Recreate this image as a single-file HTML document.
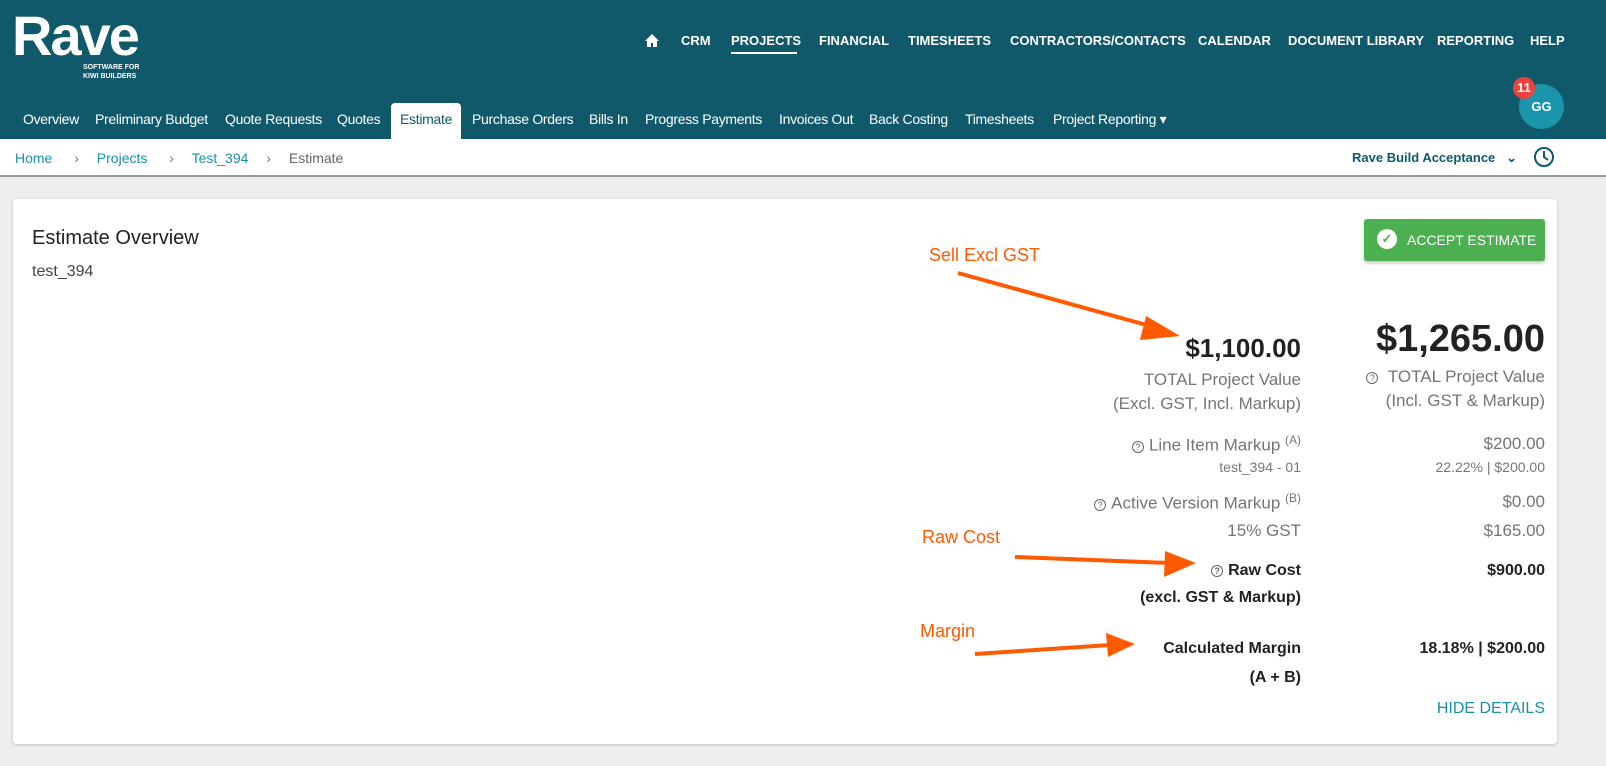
<!DOCTYPE html>
<html><head><meta charset="utf-8"><style>
*{margin:0;padding:0;box-sizing:border-box}
body{width:1606px;height:766px;background:#eeeeee;font-family:"Liberation Sans",Arial,sans-serif;position:relative;overflow:hidden}
.hdr{position:absolute;left:0;top:0;width:1606px;height:139px;background:#10596b}
.a{position:absolute;white-space:nowrap}
.top{top:33px;color:#fff;font-weight:bold;font-size:13px}
.sub{top:111px;color:#fff;font-size:14px;letter-spacing:-0.3px}
.r{text-align:right}
.g{color:#757575}
.k{color:#222}
.q{display:inline-block;width:12px;height:12px;border:1.3px solid #666;border-radius:50%;font-size:9px;line-height:10px;text-align:center;color:#666;vertical-align:1px;margin-right:5px}
.o{color:#ff5a00;font-size:18px}
</style></head><body>
<div class="hdr"></div>
<div class="a" style="left:12px;top:6px;color:#fff;font-size:56px;font-weight:bold;letter-spacing:-2px;line-height:60px">Rave</div>
<div class="a" style="left:83px;top:63px;color:#fff;font-size:7px;font-weight:bold;line-height:9px">SOFTWARE FOR<br>KIWI BUILDERS</div>
<svg class="a" style="left:644px;top:33px" width="16" height="15" viewBox="0 0 16 15"><path d="M8 1L1 8h2v6h4v-4h2v4h4V8h2z" fill="#fff"/></svg>
<div class="a top" style="left:681px">CRM</div>
<div class="a top" style="left:731px">PROJECTS</div>
<div class="a" style="left:731px;top:52px;width:66px;height:2px;background:#fff"></div>
<div class="a top" style="left:819px">FINANCIAL</div>
<div class="a top" style="left:908px">TIMESHEETS</div>
<div class="a top" style="left:1010px">CONTRACTORS/CONTACTS</div>
<div class="a top" style="left:1198px">CALENDAR</div>
<div class="a top" style="left:1288px">DOCUMENT LIBRARY</div>
<div class="a top" style="left:1437px">REPORTING</div>
<div class="a top" style="left:1530px">HELP</div>
<div class="a" style="left:391px;top:103px;width:70px;height:36px;background:#fff;border-radius:4px 4px 0 0"></div>
<div class="a sub" style="left:23px">Overview</div>
<div class="a sub" style="left:95px">Preliminary Budget</div>
<div class="a sub" style="left:225px">Quote Requests</div>
<div class="a sub" style="left:337px">Quotes</div>
<div class="a sub" style="left:400px;color:#10596b">Estimate</div>
<div class="a sub" style="left:472px">Purchase Orders</div>
<div class="a sub" style="left:589px">Bills In</div>
<div class="a sub" style="left:645px">Progress Payments</div>
<div class="a sub" style="left:779px">Invoices Out</div>
<div class="a sub" style="left:869px">Back Costing</div>
<div class="a sub" style="left:965px">Timesheets</div>
<div class="a sub" style="left:1053px">Project Reporting ▾</div>
<div class="a" style="left:1519px;top:84px;width:45px;height:45px;border-radius:50%;background:#1b95ab;color:#fff;font-weight:bold;font-size:13px;line-height:45px;text-align:center">GG</div>
<div class="a" style="left:1513px;top:77px;width:22px;height:22px;border-radius:50%;background:#f0403a;color:#fff;font-weight:bold;font-size:13px;line-height:22px;text-align:center">11</div>
<div class="a" style="left:0;top:139px;width:1606px;height:38px;background:#fff;border-bottom:2px solid #999"></div>
<div class="a" style="left:15px;top:150px;font-size:14px;color:#1b8fa8">Home <span style="color:#777;margin:0 14px 0 18px">›</span> Projects <span style="color:#777;margin:0 14px 0 18px">›</span> Test_394 <span style="color:#777;margin:0 14px 0 14px">›</span> <span style="color:#666">Estimate</span></div>
<div class="a" style="left:1352px;top:150px;font-size:13px;font-weight:bold;color:#10596b">Rave Build Acceptance &nbsp; ⌄</div>
<svg class="a" style="left:1533px;top:146px" width="22" height="22" viewBox="0 0 22 22"><circle cx="11" cy="11" r="9" fill="none" stroke="#10596b" stroke-width="2"/><path d="M11 5v6l4 3" fill="none" stroke="#10596b" stroke-width="2"/></svg>
<div class="a" style="left:13px;top:199px;width:1544px;height:545px;background:#fff;border-radius:4px;box-shadow:0 1px 3px rgba(0,0,0,.2)"></div>
<div class="a k" style="left:32px;top:227px;font-size:20px">Estimate Overview</div>
<div class="a k" style="left:32px;top:263px;font-size:16px;color:#444">test_394</div>
<div class="a" style="left:1364px;top:219px;width:181px;height:42px;background:#4caf50;border-radius:3px;box-shadow:0 2px 3px rgba(0,0,0,.25);color:#fff;font-size:14px;line-height:42px;padding-left:43px">ACCEPT ESTIMATE</div>
<div class="a" style="left:1377px;top:229px;width:20px;height:20px;border-radius:50%;background:#fff;color:#4caf50;font-size:13px;line-height:20px;text-align:center;font-weight:bold">✓</div>
<div class="a r k" style="right:305px;top:333px;font-size:26px;font-weight:bold;color:#222">$1,100.00</div>
<div class="a r g" style="right:305px;top:368px;font-size:17px;line-height:24px">TOTAL Project Value<br>(Excl. GST, Incl. Markup)</div>
<div class="a r k" style="right:61px;top:318px;font-size:38px;font-weight:bold;color:#222">$1,265.00</div>
<div class="a r g" style="right:61px;top:365px;font-size:17px;line-height:24px"><span class="q">?</span> TOTAL Project Value<br>(Incl. GST &amp; Markup)</div>
<div class="a r g" style="right:305px;top:433px;font-size:17px"><span class="q">?</span>Line Item Markup <sup style="font-size:12px">(A)</sup></div>
<div class="a r g" style="right:305px;top:459px;font-size:14px">test_394 - 01</div>
<div class="a r g" style="right:61px;top:434px;font-size:17px">$200.00</div>
<div class="a r g" style="right:61px;top:459px;font-size:14px">22.22% | $200.00</div>
<div class="a r g" style="right:305px;top:491px;font-size:17px"><span class="q">?</span>Active Version Markup <sup style="font-size:12px">(B)</sup></div>
<div class="a r g" style="right:61px;top:492px;font-size:17px">$0.00</div>
<div class="a r g" style="right:305px;top:521px;font-size:17px">15% GST</div>
<div class="a r g" style="right:61px;top:521px;font-size:17px">$165.00</div>
<div class="a r k" style="right:305px;top:557px;font-size:16px;font-weight:bold;line-height:27px"><span class="q">?</span>Raw Cost<br>(excl. GST &amp; Markup)</div>
<div class="a r k" style="right:61px;top:557px;font-size:16px;font-weight:bold;line-height:27px">$900.00</div>
<div class="a r k" style="right:305px;top:634px;font-size:16px;font-weight:bold;line-height:29px">Calculated Margin<br>(A + B)</div>
<div class="a r k" style="right:61px;top:634px;font-size:16px;font-weight:bold;line-height:29px">18.18% | $200.00</div>
<div class="a r" style="right:61px;top:700px;font-size:16px;color:#1b8fa8">HIDE DETAILS</div>
<div class="a o" style="left:929px;top:245px">Sell Excl GST</div>
<div class="a o" style="left:922px;top:527px">Raw Cost</div>
<div class="a o" style="left:920px;top:621px">Margin</div>
<svg class="a" style="left:0;top:0" width="1606" height="766"><g stroke="#ff5a00" stroke-width="4" fill="#ff5a00"><line x1="958" y1="273" x2="1150" y2="326"/><polygon points="1180,336 1146,316 1140,340" stroke="none"/><line x1="1015" y1="557" x2="1170" y2="563"/><polygon points="1196,563 1165,551 1164,577" stroke="none"/><line x1="975" y1="654" x2="1110" y2="645"/><polygon points="1135,644 1106,633 1108,657" stroke="none"/></g></svg>
</body></html>
